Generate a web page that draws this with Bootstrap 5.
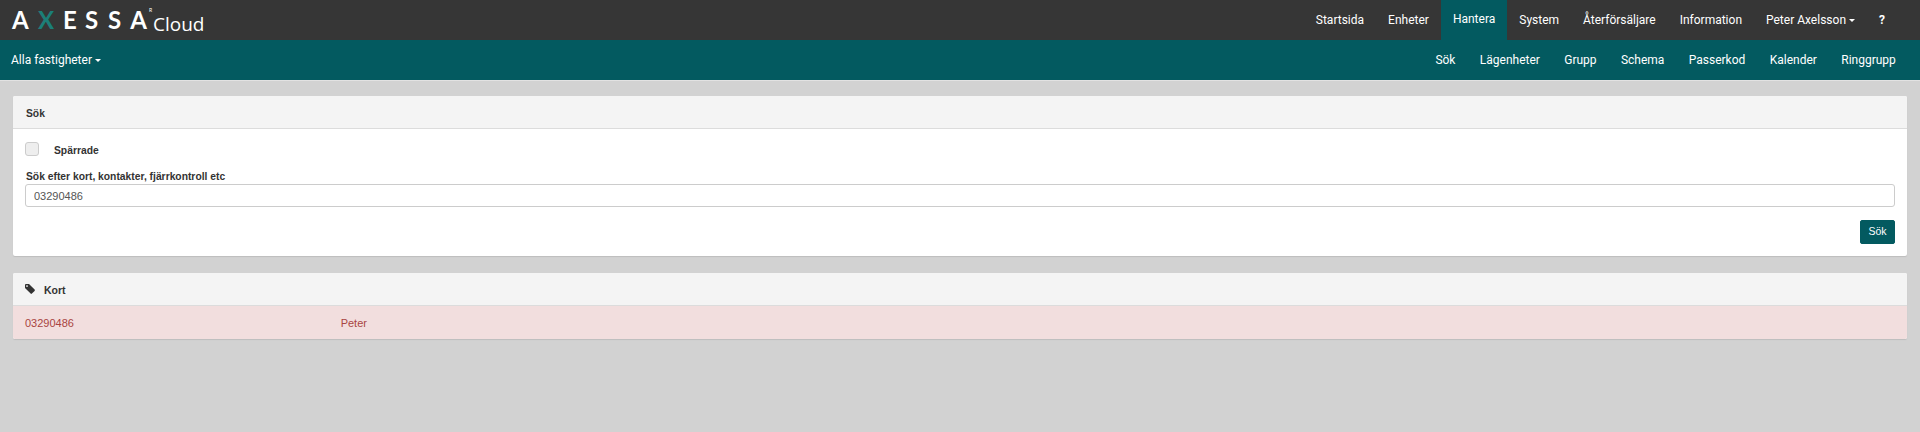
<!DOCTYPE html>
<html lang="sv">
<head>
  <meta charset="UTF-8">
  <meta name="viewport" content="width=device-width, initial-scale=1.0">
  <title>Axessa Cloud</title>
  <link href="https://cdn.jsdelivr.net/npm/bootstrap@5.3.3/dist/css/bootstrap.min.css" rel="stylesheet">
  <style>
    body {
      background-color: #d2d2d2;
      font-family: "Liberation Sans", Arial, sans-serif;
      font-size: 11px;
      color: #333;
      min-height: 432px;
    }

    .top-bar, .sub-bar {
      height: 40px;
      padding: 0 23px 0 12px;
      font-family: Roboto, sans-serif;
      font-size: 12px;
    }

    .top-bar { background-color: #363636; }
    .sub-bar { background-color: #035a60; border-bottom: 1px solid #e2e2e2; height: 41px; padding: 0 12px 0 0; }

    .top-bar .nav-link, .sub-bar .nav-link {
      color: #fff;
      padding: 0 12px;
      height: 40px;
      line-height: 41px;
    }

    .sub-bar .nav-link { padding: 0 12.2px; }
    .sub-bar .nav-item-first { padding-left: 11px; }

    .top-bar .nav-link.active {
      background-color: #035a60;
      color: #fff;
      line-height: 39px;
    }

    .logo-mark {
      color: #fff;
      font-family: "Lato", sans-serif;
      font-size: 24px;
      font-weight: 700;
      line-height: 40px;
      display: flex;
      align-items: center;
    }

    .logo-mark span { display: block; text-align: center; }
    .logo-x { color: #1c7f78; }
    .logo-mark .logo-reg { font-size: 5px; line-height: 1; font-weight: 400; align-self: flex-start; margin: 12px 0 0 1px; width: 5px; }
    .logo-cloud {
      font-family: "Open Sans", sans-serif;
      font-weight: 400;
      font-size: 19px;
      margin-top: 8px;
    }

    .down-caret {
      display: inline-block;
      width: 0;
      height: 0;
      margin-left: 3px;
      vertical-align: middle;
      border-top: 3px solid #fff;
      border-left: 3px solid transparent;
      border-right: 3px solid transparent;
    }

    .help-link { font-weight: 700; }

    .page-wrap { padding: 15px 13px 0 13px; }

    .panel-box {
      border: 0;
      border-radius: 2px;
      box-shadow: 0 1px 1px rgba(0, 0, 0, .1);
      margin-bottom: 17px;
      font-size: 11px;
    }

    .panel-box .card-header {
      background-color: #f4f4f4;
      border-bottom: 1px solid #dcdcdc;
      border-radius: 2px 2px 0 0;
      height: 33px;
      padding: 0 13px;
      font-size: 10.3px;
      font-weight: 700;
      color: #333;
      display: flex;
      align-items: center;
    }

    .panel-box .card-header span { padding-top: 4px; }

    .panel-box .card-body { padding: 13px 12px 12px 12px; }

    .check-box {
      width: 14px;
      height: 14px;
      background-color: #eee;
      border: 1px solid #ccc;
      border-radius: 3px;
    }

    .check-row { height: 14px; margin-bottom: 14px; font-size: 10.3px; font-weight: 700; gap: 15px; }
    .check-row span { padding-top: 4px; }

    .field-label { font-size: 10.3px; font-weight: 700; margin-bottom: 0; display: block; line-height: 14px; padding-left: 1px; }

    .field-input {
      height: 23px;
      padding: 0 8px;
      font-size: 11px;
      color: #555;
      border: 1px solid #ccc;
      border-radius: 3px;
      box-shadow: none;
    }

    .btn-search {
      background-color: #035a60;
      border-color: #035a60;
      color: #fff;
      font-size: 10.5px;
      width: 35px;
      height: 24px;
      padding: 0;
      border-radius: 2px;
      margin-top: 13px;
    }

    .tag-icon { width: 10px; height: 10px; margin-right: 9px; margin-left: -1px; }
    .kort-title { color: #222; }
    .panel-box .kort-title span { font-size: 10.5px; }

    .result-row {
      background-color: #f2dede;
      color: #a94442;
      height: 33px;
      line-height: 35px;
      margin: 0;
      border-radius: 0 0 2px 2px;
    }

    .result-row > div { padding: 0 12px; }
  </style>
</head>
<body>

  <nav class="top-bar d-flex justify-content-between align-items-center">
    <div class="logo-mark">
      <span style="width:15px">A</span>
      <span class="logo-x" style="width:15px;margin-left:11px">X</span>
      <span style="width:11px;margin-left:10px">E</span>
      <span style="width:12px;margin-left:11px">S</span>
      <span style="width:12px;margin-left:11px">S</span>
      <span style="width:17px;margin-left:10px">A</span>
      <span class="logo-reg">R</span>
      <span class="logo-cloud">Cloud</span>
    </div>
    <ul class="nav">
      <li class="nav-item"><a class="nav-link" href="#">Startsida</a></li>
      <li class="nav-item"><a class="nav-link" href="#">Enheter</a></li>
      <li class="nav-item"><a class="nav-link active" href="#">Hantera</a></li>
      <li class="nav-item"><a class="nav-link" href="#">System</a></li>
      <li class="nav-item"><a class="nav-link" href="#">Återförsäljare</a></li>
      <li class="nav-item"><a class="nav-link" href="#">Information</a></li>
      <li class="nav-item"><a class="nav-link" href="#">Peter Axelsson<span class="down-caret"></span></a></li>
      <li class="nav-item"><a class="nav-link help-link" href="#">?</a></li>
    </ul>
  </nav>

  <nav class="sub-bar d-flex justify-content-between">
    <ul class="nav">
      <li class="nav-item"><a class="nav-link nav-item-first" href="#">Alla fastigheter<span class="down-caret"></span></a></li>
    </ul>
    <ul class="nav">
      <li class="nav-item"><a class="nav-link" href="#">Sök</a></li>
      <li class="nav-item"><a class="nav-link" href="#">Lägenheter</a></li>
      <li class="nav-item"><a class="nav-link" href="#">Grupp</a></li>
      <li class="nav-item"><a class="nav-link" href="#">Schema</a></li>
      <li class="nav-item"><a class="nav-link" href="#">Passerkod</a></li>
      <li class="nav-item"><a class="nav-link" href="#">Kalender</a></li>
      <li class="nav-item"><a class="nav-link" href="#">Ringgrupp</a></li>
    </ul>
  </nav>

  <div class="page-wrap">
    <div class="card panel-box">
      <div class="card-header"><span>Sök</span></div>
      <div class="card-body">
        <div class="check-row d-flex align-items-center">
          <div class="check-box"></div>
          <span>Spärrade</span>
        </div>
        <label class="field-label" for="searchField">Sök efter kort, kontakter, fjärrkontroll etc</label>
        <input class="form-control field-input" id="searchField" type="text" value="03290486">
        <div class="d-flex justify-content-end">
          <button class="btn btn-search" type="button">Sök</button>
        </div>
      </div>
    </div>

    <div class="card panel-box">
      <div class="card-header kort-title">
        <svg class="tag-icon" viewBox="0 0 10 10" fill="#333"><path d="M0 1 a1 1 0 0 1 1-1 H4 L9.6 5.6 a1 1 0 0 1 0 1.3 L6.9 9.6 a1 1 0 0 1-1.3 0 L0 4 Z M2 1.3 a.8.8 0 1 0 .01 0 Z" fill-rule="evenodd"/></svg>
        <span>Kort</span>
      </div>
      <div class="row result-row">
        <div class="col-2">03290486</div>
        <div class="col-2">Peter</div>
      </div>
    </div>
  </div>

  <script src="https://cdn.jsdelivr.net/npm/bootstrap@5.3.3/dist/js/bootstrap.bundle.min.js"></script>
</body>
</html>
